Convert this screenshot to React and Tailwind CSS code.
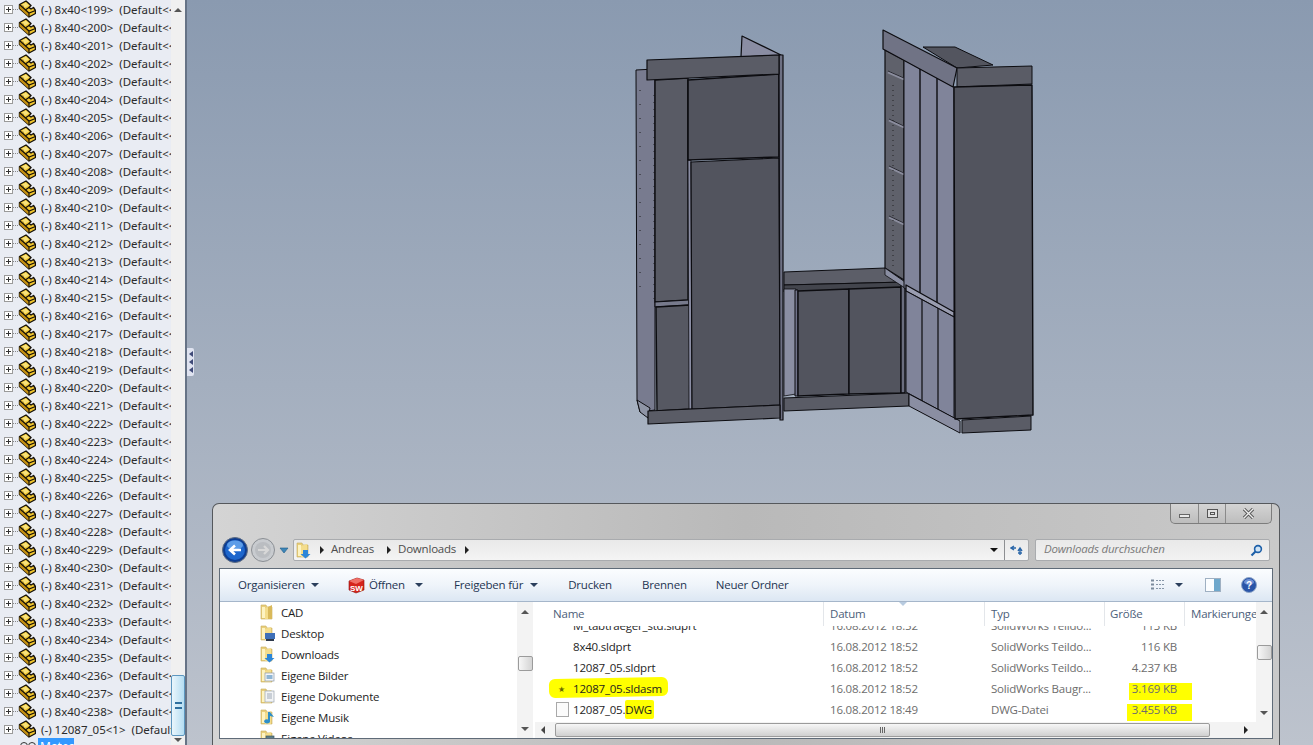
const FONT_TREE = "font-['Noto_Sans','Open_Sans',sans-serif]";
const FONT_UI = "font-['Open_Sans',sans-serif] text-[11.5px] tracking-[-0.2px]";

const parts = [];
for (let n = 199; n <= 238; n++) parts.push(`(-) 8x40<${n}>  (Default<<`);
parts.push("(-) 12087_05<1>  (Default");

const folders = [
  { name: "CAD", kind: "plain" },
  { name: "Desktop", kind: "desktop" },
  { name: "Downloads", kind: "down" },
  { name: "Eigene Bilder", kind: "pic" },
  { name: "Eigene Dokumente", kind: "doc" },
  { name: "Eigene Musik", kind: "music" },
  { name: "Eigene Videos", kind: "video" },
];

const files = [
  { name: "M_tabtraeger_std.sldprt", date: "16.08.2012 18:52", type: "SolidWorks Teildo...", size: "113 KB" },
  { name: "8x40.sldprt", date: "16.08.2012 18:52", type: "SolidWorks Teildo...", size: "116 KB" },
  { name: "12087_05.sldprt", date: "16.08.2012 18:52", type: "SolidWorks Teildo...", size: "4.237 KB" },
  { name: "12087_05.sldasm", date: "16.08.2012 18:52", type: "SolidWorks Baugr...", size: "3.169 KB", asm: true },
  { name: "12087_05.", ext: "DWG", date: "16.08.2012 18:49", type: "DWG-Datei", size: "3.455 KB", dwg: true },
];

function PartIcon() {
  return (
    <svg width="18" height="18" viewBox="0 0 18 18" className="shrink-0">
      <path d="M1.5 4.5 L8 1 L13 5.5 L11 7.5 L13 9 L15.5 7.5 L17.5 10.5 L17.5 13.5 L11 17 L1.5 8.5Z" fill="#f2c62e" stroke="#15110a" strokeWidth="1.4" strokeLinejoin="round" />
      <path d="M1.5 4.5 L11 13 L11 17 L1.5 8.5Z" fill="#c48f12" />
      <path d="M1.5 4.5 L11 13 L17.5 10.5 M11 13 L11 17 M7.5 4 L5 6 M11 7.5 L8 9.5" fill="none" stroke="#15110a" strokeWidth="1.2" />
      <path d="M4 4.5 L8 2.5 L11 5.5 L7 7.5Z" fill="#f9e27a" />
    </svg>
  );
}

function TreeRow({ text }) {
  return (
    <div className="flex h-[18px] items-center overflow-hidden">
      <div className="ml-1 flex h-[9px] w-[9px] shrink-0 items-center justify-center border border-[#9a9a9a] bg-white text-[#333]">
        <div className="relative h-[5px] w-[5px]">
          <div className="absolute left-0 top-[2px] h-px w-[5px] bg-[#333]" />
          <div className="absolute left-[2px] top-0 h-[5px] w-px bg-[#333]" />
        </div>
      </div>
      <div className="w-[5px] shrink-0 border-t border-dotted border-[#888]" />
      <PartIcon />
      <span className={`ml-[5px] mt-[2px] whitespace-pre text-[11.5px] leading-[18px] text-[#2b2b2b] ${FONT_TREE}`}>{text}</span>
    </div>
  );
}

function FolderIcon({ kind }) {
  return (
    <svg width="15" height="17" viewBox="0 0 15 17" className="shrink-0">
      <path d="M1 1 H6 L7 3 H12 V15 H1Z" fill="#e9cf7c" stroke="#c8ac5a" strokeWidth="0.6" />
      <path d="M2 3 H5 V14 H2Z" fill="#fdf3c2" />
      <path d="M5 4 L11 2 V15 H5Z" fill="#f4dd8c" />
      {kind === "plain" && <path d="M8 3 L12 1 V15 L8 15Z" fill="#d9b95a" />}
      {kind === "desktop" && (
        <g>
          <rect x="5" y="8" width="10" height="6" fill="#3f70b8" />
          <rect x="6" y="14" width="8" height="2" fill="#2f3a4c" />
        </g>
      )}
      {kind === "down" && <path d="M7 8 H12 V12 H14.5 L9.5 16.5 L4.5 12 H7Z" fill="#2c86d8" />}
      {kind === "pic" && (
        <g>
          <rect x="5" y="6" width="9" height="8" fill="#f4f6f8" stroke="#8b98a8" strokeWidth="0.7" />
          <rect x="6.5" y="8" width="6" height="4" fill="#8fb6d6" />
        </g>
      )}
      {kind === "doc" && (
        <g>
          <rect x="5" y="3" width="9" height="11" fill="#f2f4f6" stroke="#9aa4b0" strokeWidth="0.7" />
          <path d="M7 6 H12 M7 8 H12 M7 10 H12" stroke="#8b98a8" strokeWidth="0.8" />
        </g>
      )}
      {kind === "music" && <path d="M10 3 V12 A3 2 0 1 1 8 10.5 V3Z M10 3 L14 8 L10 7Z" fill="#2f8fc8" />}
      {kind === "video" && <rect x="6" y="6" width="8" height="7" fill="#5c7f8a" stroke="#3f5660" strokeWidth="0.7" />}
    </svg>
  );
}

function UpArrow() {
  return <div className="h-0 w-0 border-x-[4px] border-b-[4px] border-x-transparent border-b-[#555]" />;
}
function DownArrow({ color = "border-t-[#555]" }) {
  return <div className={`h-0 w-0 border-x-[4px] border-t-[4px] border-x-transparent ${color}`} />;
}
function Crumb() {
  return <div className="h-0 w-0 border-y-[4px] border-l-[4px] border-y-transparent border-l-[#222]" />;
}
function Thumb({ className }) {
  return <div className={`rounded-[2px] border border-[#9b9b9b] bg-linear-to-r from-[#f7f7f7] to-[#d4d4d4] ${className}`} />;
}

function CadModel() {
  return (
    <svg width="1126" height="503" viewBox="187 0 1126 503" className="block shrink-0" stroke="#0c0c10" strokeLinejoin="round">
      {/* left tower */}
      <path d="M742 36 L781 55 L741 57Z" fill="#8a8da3" strokeWidth="1.2" />
      <path d="M636 70 L655 69 L655 410 L640 412 L637 400Z" fill="#787b8f" strokeWidth="1" />
      <path d="M637 400 L640 412 L648 418 L650 408Z" fill="#8f95a6" strokeWidth="1" />
      <path d="M655 80 L688 78 L688 300 L655 302Z" fill="#595b65" strokeWidth="1.4" />
      <path d="M655 302 L689 300 L689 305 L655 307Z" fill="#777a8c" strokeWidth="1" />
      <path d="M656 307 L690 305 L690 409 L657 411Z" fill="#565862" strokeWidth="1.4" />
      <path d="M688 160 L691 160 L692 409 L689 409Z" fill="#8a8da3" strokeWidth="0.8" />
      <path d="M688 80 L779 74 L779 157 L688 160Z" fill="#52545e" strokeWidth="1.6" />
      <path d="M691 162 L779 158 L780 405 L692 409Z" fill="#52545e" strokeWidth="1.2" />
      <path d="M779 55 L783 55 L783 420 L780 420Z" fill="#6d7083" strokeWidth="1.2" />
      <path d="M647 60 L779 55 L779 74 L647 80Z" fill="#5a5c66" strokeWidth="1.2" />
      <path d="M648 411 L780 405 L780 418 L648 424Z" fill="#5a5c66" strokeWidth="1.2" />
      <path d="M640 90 V290" stroke="#111" strokeWidth="0.9" strokeDasharray="1 13" fill="none" />
      <path d="M654 95 V300" stroke="#111" strokeWidth="0.8" strokeDasharray="1 6" fill="none" />

      {/* middle unit */}
      <path d="M784 272 L885 268 L905 282 L784 285Z" fill="#5c5e68" strokeWidth="1" />
      <path d="M784 285 L905 282 L905 289 L784 292Z" fill="#43454d" strokeWidth="1" />
      <path d="M784 289 L796 289 L796 394 L784 396Z" fill="#8a8ea2" strokeWidth="0.8" />
      <path d="M795 290 L798 290 L798 396 L795 396Z" fill="#70738a" strokeWidth="1" />
      <path d="M798 291 L849 289 L849 394 L798 396Z" fill="#52545e" strokeWidth="1.4" />
      <path d="M849 289 L901 287 L901 393 L849 394Z" fill="#52545e" strokeWidth="1.4" />
      <path d="M901 284 L905 284 L905 393 L901 393Z" fill="#6a6d7e" strokeWidth="1.4" />
      <path d="M784 398 L909 393 L909 406 L784 411Z" fill="#5a5c66" strokeWidth="1" />

      {/* right tower */}
      <path d="M885 50 L904 60 L904 280 L885 268Z" fill="#5f616b" strokeWidth="1.2" />
      <path d="M888 72 L904 79 M889 120 L904 127 M889 167 L904 174 M889 217 L904 224" fill="none" stroke="#8b8d9e" strokeWidth="2.5" />
      <path d="M888 71 L904 78 M889 119 L904 126 M889 166 L904 173 M889 216 L904 223" fill="none" stroke="#101015" strokeWidth="0.8" />
      <path d="M893 85 V270" stroke="#111" strokeWidth="0.8" strokeDasharray="1 4" fill="none" />
      <path d="M885 268 L905 282 L905 288 L885 275Z" fill="#8a8ea2" strokeWidth="0.8" />
      <path d="M904 60 L954 87 L954 315 L904 288Z" fill="#80849a" strokeWidth="1" />
      <path d="M920 69 V298 M937 78 V306" fill="none" strokeWidth="1.4" />
      <path d="M906 285 L954 312 L954 317 L906 291Z" fill="#9a9db0" strokeWidth="1.3" />
      <path d="M906 291 L954 317 L954 418 L906 392Z" fill="#80849a" strokeWidth="1" />
      <path d="M922 300 V402 M938 308 V410" fill="none" strokeWidth="1.2" />
      <path d="M909 394 L960 421 L960 433 L909 406Z" fill="#8a8ea2" strokeWidth="1" />
      <path d="M923 47 L955 47 L993 65 L957 68Z" fill="#53555f" strokeWidth="1" />
      <path d="M883 30 L957 68 L953 87 L883 49Z" fill="#707385" strokeWidth="1.2" />
      <path d="M957 68 L1032 66 L1032 84 L957 87Z" fill="#5a5c66" strokeWidth="1" />
      <path d="M954 87 L1032 85 L1033 415 L955 419Z" fill="#52545e" strokeWidth="1.4" />
      <path d="M962 420 L1031 416 L1031 430 L962 433Z" fill="#5a5c66" strokeWidth="1" />
    </svg>
  );
}

function WindowButtons() {
  return (
    <div className="mr-[7px] flex h-[20px] w-[102px] overflow-hidden rounded-b-[5px] border border-t-0 border-[#7d7d7d] bg-linear-to-b from-[#d4d4d4] to-[#bdbdbd]">
      <div className="flex w-[28px] items-end justify-center border-r border-[#8a8a8a] pb-[5px]">
        <div className="h-[4px] w-[11px] border border-[#666] bg-[#e8e8e8]" />
      </div>
      <div className="flex w-[27px] items-center justify-center border-r border-[#8a8a8a]">
        <div className="flex h-[9px] w-[11px] items-center justify-center border border-[#555] bg-[#e0e0e0]">
          <div className="h-[3px] w-[5px] border border-[#555]" />
        </div>
      </div>
      <div className="flex flex-1 items-center justify-center">
        <svg width="13" height="11" viewBox="0 0 13 11">
          <path d="M2 1 L11 10 M11 1 L2 10" stroke="#555" strokeWidth="3.2" />
          <path d="M2 1 L11 10 M11 1 L2 10" stroke="#eee" strokeWidth="1.4" />
        </svg>
      </div>
    </div>
  );
}

function NavBar() {
  return (
    <div className="flex h-[22px] items-center pl-[9px] pr-[9px]">
      <svg width="71" height="28" viewBox="0 0 71 28" className="shrink-0">
        <circle cx="41" cy="14" r="11.5" fill="#c8cbcf" stroke="#8b8f94" />
        <circle cx="41" cy="14" r="8" fill="#babdc1" />
        <path d="M36 14 H45 M42 10 L46 14 L42 18" stroke="#d8d8d8" strokeWidth="2.2" fill="none" />
        <circle cx="13" cy="14" r="12.5" fill="#0d3d92" stroke="#5f6d82" />
        <circle cx="13" cy="14" r="10" fill="#1d66cc" />
        <ellipse cx="13" cy="9" rx="8" ry="4.5" fill="#5d9de8" />
        <path d="M19 14 H9 M13 9.5 L8 14 L13 18.5" stroke="#fff" strokeWidth="2.6" fill="none" />
        <path d="M58 12 H66 L62 17Z" fill="#3e86b8" stroke="#1f5c88" strokeWidth="0.6" />
      </svg>
      <div className="flex h-[22px] w-[736px] shrink-0 items-center rounded-[2px] border border-[#a9abae] bg-linear-to-b from-[#e9e9e9] to-[#f4f4f4]">
        <div className="ml-[2px]">
          <FolderIcon kind="down" />
        </div>
        <div className="ml-[9px]"><Crumb /></div>
        <span className={`mb-[2px] ml-[7px] text-[#4d4d4d] ${FONT_UI}`}>Andreas</span>
        <div className="ml-[13px]"><Crumb /></div>
        <span className={`mb-[2px] ml-[7px] text-[#4d4d4d] ${FONT_UI}`}>Downloads</span>
        <div className="ml-[9px]"><Crumb /></div>
        <div className="ml-auto mr-[6px]"><DownArrow color="border-t-[#111]" /></div>
        <div className="flex h-full w-[24px] items-center justify-center border-l border-[#8d8f92]">
          <svg width="14" height="11" viewBox="0 0 14 11">
            <path d="M6 3 H2 M4 1 L1 3 L4 5" stroke="#2a66a8" strokeWidth="1.4" fill="none" />
            <path d="M8 8 H12 M10 10 V4 M8 6 L10 3 L12 6" stroke="#2a66a8" strokeWidth="1.4" fill="none" />
          </svg>
        </div>
      </div>
      <div className="ml-[6px] flex h-[22px] flex-1 items-center rounded-[2px] border border-[#a9abae] bg-linear-to-b from-[#e9e9e9] to-[#f2f2f2] pl-[8px] pr-[6px]">
        <span className={`mb-[2px] italic text-[#7a7a7a] ${FONT_UI}`}>Downloads durchsuchen</span>
        <svg width="13" height="13" viewBox="0 0 13 13" className="ml-auto">
          <circle cx="8" cy="5" r="3.4" fill="#cfe4f6" stroke="#1d5fa8" strokeWidth="1.6" />
          <path d="M5.5 7.5 L1.5 11.5" stroke="#1d5fa8" strokeWidth="2.2" />
        </svg>
      </div>
    </div>
  );
}

function SwIcon() {
  return (
    <svg width="17" height="17" viewBox="0 0 17 17" className="shrink-0">
      <path d="M1 4 L9 1 L16 3 L16 13 L8 16 L1 13Z" fill="#d5241c" stroke="#8a120d" strokeWidth="0.6" />
      <path d="M1 4 L8 7 L16 3 L9 1Z" fill="#f07068" />
      <text x="2" y="13.5" fontSize="8" fontWeight="700" fill="#fff" fontFamily="Liberation Sans, sans-serif">SW</text>
    </svg>
  );
}

function Toolbar() {
  return (
    <div className={`flex h-[33px] shrink-0 items-center border-b border-[#a5b6ca] bg-linear-to-b from-[#fbfdff] via-[#eff4fa] to-[#dce7f3] pl-[18px] pr-[15px] text-[#1f3552] ${FONT_UI}`}>
      <span>Organisieren</span>
      <div className="ml-[6px]"><DownArrow color="border-t-[#2b3f5c]" /></div>
      <div className="ml-[29px]"><SwIcon /></div>
      <span className="ml-[4px]">Öffnen</span>
      <div className="ml-[10px]"><DownArrow color="border-t-[#2b3f5c]" /></div>
      <span className="ml-[31px]">Freigeben für</span>
      <div className="ml-[7px]"><DownArrow color="border-t-[#2b3f5c]" /></div>
      <span className="ml-[30px]">Drucken</span>
      <span className="ml-[30px]">Brennen</span>
      <span className="ml-[29px]">Neuer Ordner</span>
      <svg width="16" height="12" viewBox="0 0 16 12" className="ml-auto shrink-0">
        <path d="M1 1.5 H4 M1 5.5 H4 M1 9.5 H4" stroke="#7a8a9c" strokeWidth="2" />
        <path d="M6 1.5 H15 M6 5.5 H15 M6 9.5 H15" stroke="#8696a8" strokeWidth="1" strokeDasharray="2 1" />
      </svg>
      <div className="ml-[9px]"><DownArrow color="border-t-[#2b3f5c]" /></div>
      <div className="ml-[22px] flex h-[14px] w-[16px] justify-end border border-[#9fb0c2] bg-[#fbfdff]">
        <div className="h-full w-[6px] bg-[#6fa8cc]" />
      </div>
      <svg width="16" height="16" viewBox="0 0 16 16" className="ml-[20px] shrink-0">
        <circle cx="8" cy="8" r="7.5" fill="#2a55a8" stroke="#8fa6c8" />
        <ellipse cx="8" cy="5" rx="5" ry="3" fill="#6f90d4" />
        <text x="5" y="12" fontSize="10" fontWeight="700" fill="#fff" fontFamily="Liberation Sans, sans-serif">?</text>
      </svg>
    </div>
  );
}

function FolderTree() {
  return (
    <div className="flex w-[313px] shrink-0 overflow-hidden bg-white">
      <div className="flex-1 overflow-hidden pl-[40px]">
        {folders.map((f) => (
          <div key={f.name} className="flex h-[21px] items-center gap-[6px]">
            <FolderIcon kind={f.kind} />
            <span className={`text-[#1e1e1e] ${FONT_UI}`}>{f.name}</span>
          </div>
        ))}
      </div>
      <div className="flex w-[16px] flex-col items-center bg-[#f3f3f3]">
        <div className="mt-[8px]"><UpArrow /></div>
        <Thumb className="mt-[42px] h-[15px] w-[15px]" />
        <div className="mt-auto mb-[7px]"><DownArrow /></div>
      </div>
    </div>
  );
}

function FileRow({ f }) {
  return (
    <div className="grid h-[21px] grid-cols-[295px_161px_120px_66px] items-center">
      <div className="relative flex items-center pl-[21px]">
        {f.asm && <div className="absolute left-[14px] top-[-2px] h-[19px] w-[119px] -rotate-1 rounded-[6px] bg-[#ffff00]" />}
        <div className="relative flex w-[17px] shrink-0 items-center">
          {f.asm && <span className="ml-[2px] text-[8px] leading-none text-[#6a6a00]">★</span>}
          {f.dwg && <div className="h-[15px] w-[13px] border border-[#a9a9a9] bg-[#fbfbfb]" />}
        </div>
        <span className="relative whitespace-pre text-[#1e1e1e]">
          {f.name}
          {f.ext && <span className="rounded-[2px] bg-[#ffff00] py-[2px] pr-[2px]">{f.ext}</span>}
        </span>
      </div>
      <span className="whitespace-nowrap text-[#6d6d6d]">{f.date}</span>
      <span className="whitespace-nowrap text-[#6d6d6d]">{f.type}</span>
      <div className="relative whitespace-nowrap text-right text-[#6d6d6d]">
        {f.asm && <div className="absolute right-[-15px] top-[3px] h-[17px] w-[63px] bg-[#ffff00]" />}
        {f.dwg && <div className="absolute right-[-15px] top-[3px] h-[17px] w-[65px] bg-[#ffff00]" />}
        <span className="relative">{f.size}</span>
      </div>
    </div>
  );
}

function FileList() {
  return (
    <div className={`ml-[2px] flex min-w-0 flex-1 flex-col overflow-hidden bg-white ${FONT_UI}`}>
      <div className="flex min-h-0 flex-1">
        <div className="flex min-w-0 flex-1 flex-col overflow-hidden">
          <div className="relative flex h-[24px] shrink-0 items-center bg-white text-[#4c607a]">
            <div className="flex h-full w-[289px] items-center border-r border-[#e3e6ea] pl-[18px]">Name</div>
            <div className="flex h-full w-[161px] items-center border-r border-[#e3e6ea] pl-[6px]">Datum</div>
            <div className="flex h-full w-[120px] items-center border-r border-[#e3e6ea] pl-[6px]">Typ</div>
            <div className="flex h-full w-[80px] items-center border-r border-[#e3e6ea] pl-[5px]">Größe</div>
            <div className="flex h-full flex-1 items-center overflow-hidden whitespace-nowrap pl-[6px]">Markierungen</div>
            <div className="absolute left-[364px] top-0"><DownArrow color="border-t-[#b8cbe0]" /></div>
          </div>
          <div className="min-h-0 flex-1 overflow-hidden">
            <div className="mt-[-11px]">
              {files.map((f) => (
                <FileRow key={f.name + f.date} f={f} />
              ))}
            </div>
          </div>
        </div>
        <div className="flex w-[16px] shrink-0 flex-col items-center bg-[#f3f3f3]">
          <div className="mt-[8px]"><UpArrow /></div>
          <Thumb className="mt-[31px] h-[15px] w-[15px]" />
          <div className="mt-auto mb-[7px]"><DownArrow /></div>
        </div>
      </div>
      <div className="flex h-[16px] shrink-0 items-center bg-[#f3f3f3]">
        <div className="ml-[6px] h-0 w-0 border-y-[4px] border-r-[4px] border-y-transparent border-r-[#444]" />
        <div className="ml-[10px] flex h-[14px] w-[655px] items-center justify-center rounded-[2px] border border-[#9b9b9b] bg-linear-to-b from-[#f7f7f7] to-[#d0d0d0]">
          <div className="flex gap-px">
            <div className="h-[6px] w-px bg-[#666]" />
            <div className="h-[6px] w-px bg-[#666]" />
            <div className="h-[6px] w-px bg-[#666]" />
          </div>
        </div>
        <div className="ml-[34px]"><Crumb /></div>
      </div>
    </div>
  );
}

export default function App() {
  return (
    <div className="flex h-[745px] w-[1313px] overflow-hidden bg-[#a0abbb]">
      <div className="relative flex w-[187px] shrink-0 overflow-hidden border-r-2 border-[#667386]">
        <div className="w-[171px] shrink-0 overflow-hidden bg-[#e9ecf3]">
          {parts.map((t) => (
            <TreeRow key={t} text={t} />
          ))}
          <div className="flex h-[18px] items-center pl-[20px]">
            <div className="h-[10px] w-[8px] rounded-full border border-[#333]" />
            <div className="h-[10px] w-[8px] rounded-full border border-[#333]" />
            <span className={`ml-[2px] w-[36px] bg-[#3399ff] pl-[2px] text-[12px] text-white ${FONT_TREE}`}>Mates</span>
          </div>
        </div>
        <div className="flex w-[14px] shrink-0 flex-col items-center bg-[#f0f0f0]">
          <div className="mt-[8px]"><UpArrow /></div>
          <div className="mt-auto flex h-[61px] w-[14px] items-center justify-center rounded-[2px] border border-[#5d97c0] bg-linear-to-r from-[#eaf6fc] to-[#b4ddf2]">
            <div className="h-[7px] w-[7px] border-y-2 border-[#2e6f9e]" />
          </div>
          <div className="mb-[3px] mt-[2px]"><DownArrow /></div>
        </div>
      </div>

      <div className="relative flex min-w-0 flex-1 flex-col bg-linear-to-b from-[#8a9ab0] to-[#bdc3cd]">
        <div className="absolute left-0 top-[348px] flex h-[28px] w-[7px] flex-col items-center justify-center gap-[2px] rounded-r-[2px] bg-[#dfe3f0]">
          {[0, 1, 2].map((i) => (
            <div key={i} className="h-0 w-0 border-y-[3px] border-r-[4px] border-y-transparent border-r-[#3f4a78]" />
          ))}
        </div>
        <CadModel />
        <div className="ml-[25px] flex h-[242px] w-[1068px] shrink-0 flex-col rounded-t-[7px] border border-b-0 border-[#55585c] bg-linear-to-r from-[#d4d4d4] via-[#b9b9b9] to-[#c9c9c9]">
          <div className="flex h-[35px] shrink-0 items-start justify-end">
            <WindowButtons />
          </div>
          <NavBar />
          <div className="mx-[6px] mb-[6px] mt-[7px] flex min-h-0 flex-1 flex-col border border-[#5f6b78] bg-white">
            <Toolbar />
            <div className="flex min-h-0 flex-1">
              <FolderTree />
              <FileList />
            </div>
          </div>
        </div>
      </div>
    </div>
  );
}
